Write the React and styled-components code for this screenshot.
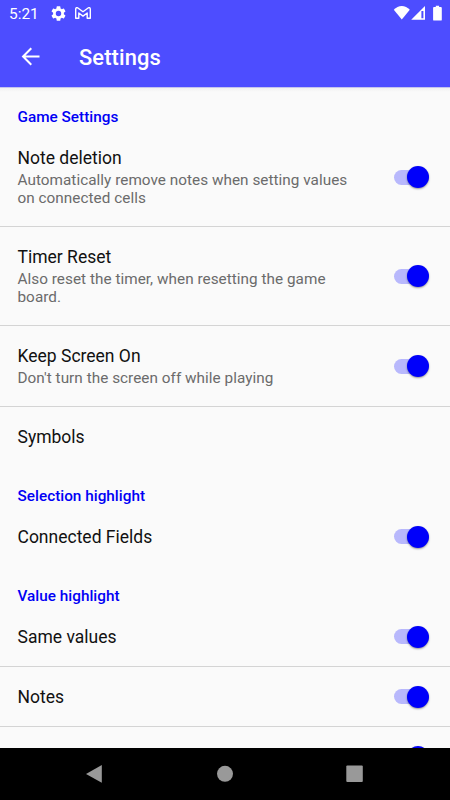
import React from 'react'
import styled, { createGlobalStyle } from 'styled-components';

const GlobalStyle = createGlobalStyle`
  * { box-sizing: border-box; }
  body {
    margin: 0;
    background: #fafafa;
    font-family: Roboto, "Noto Sans", sans-serif;
  }
`;

const Screen = styled.div`
  display: flex;
  flex-direction: column;
  width: 450px;
  height: 800px;
  overflow: hidden;
  background: #fafafa;
`;

const StatusBar = styled.div`
  display: flex;
  flex: none;
  align-items: center;
  height: 26px;
  padding: 0 7px 0 9px;
  background: #4d4dff;
  color: #fff;
`;

const Clock = styled.span`
  width: 42px;
  padding-top: 2px;
  font-size: 15.4px;
  line-height: 18px;
`;

const StatusIcons = styled.div`
  display: flex;
  flex: 1;
  gap: 9px;
  align-items: center;
`;

const Icon = styled.svg`
  display: block;
  flex: none;
`;

const Toolbar = styled.header`
  display: flex;
  flex: none;
  align-items: center;
  height: 61px;
  padding: 0 17px;
  background: #4d4dff;
  color: #fff;
`;

const BackButton = styled.button`
  display: flex;
  width: 62px;
  padding: 0;
  border: 0;
  background: none;
  color: inherit;
`;

const ToolbarTitle = styled.h1`
  margin: 3px 0 0;
  font-size: 21.9px;
  font-weight: 500;
  line-height: 26px;
  letter-spacing: 0.1px;
`;

const List = styled.main`
  flex: 1;
  min-height: 0;
  padding-top: 1px;
  overflow: hidden;
  background: linear-gradient(#c4c4ee 0 1px, #f1f1f1 1px, #fafafa 5px);
`;

const Category = styled.h2`
  display: flex;
  align-items: center;
  height: 40px;
  margin: 0;
  padding: 17px 17.5px 0;
  color: #0000f5;
  font-size: 15.3px;
  font-weight: 500;
  line-height: 18px;
  letter-spacing: 0.02px;
`;

const Row = styled.div`
  display: flex;
  align-items: center;
  height: ${(p) => p.$height}px;
  padding: 0 21.5px 0 17.5px;
  border-bottom: 1px solid ${(p) => (p.$divider ? '#d4d4d4' : 'transparent')};
`;

const RowText = styled.div`
  flex: 1;
  padding-top: ${(p) => (p.$single ? '2px' : '0')};
  padding-right: 34px;
`;

const RowTitle = styled.div`
  color: #111;
  font-size: 17.5px;
  line-height: 21px;
`;

const Summary = styled.div`
  margin-top: 2px;
  color: #6b6b6b;
  font-size: 15.3px;
  line-height: 18px;
  letter-spacing: 0.035px;
`;

const Track = styled.div`
  display: flex;
  flex: none;
  align-items: center;
  justify-content: flex-end;
  width: 34.5px;
  height: 15px;
  border-radius: 8px;
  background: linear-gradient(90deg, #b8b8fc 30px, transparent 30px);
`;

const Thumb = styled.div`
  width: 22px;
  height: 22px;
  flex: none;
  border-radius: 50%;
  background: #0000fa;
  box-shadow: 0 1px 2px rgba(0, 0, 0, 0.4);
`;

const NavBar = styled.nav`
  display: flex;
  flex: none;
  align-items: center;
  justify-content: space-between;
  height: 52px;
  padding: 0 86px 0 85px;
  background: #000;
  color: #999;
`;

const groups = [
    {
        title: 'Game Settings',
        items: [
            { title: 'Note deletion', summary: 'Automatically remove notes when setting values on connected cells', height: 99, toggle: true, divider: true },
            { title: 'Timer Reset', summary: 'Also reset the timer, when resetting the game board.', height: 99, toggle: true, divider: true },
            { title: 'Keep Screen On', summary: "Don't turn the screen off while playing", height: 81, toggle: true, divider: true },
            { title: 'Symbols', height: 60 },
        ],
    },
    {
        title: 'Selection highlight',
        items: [{ title: 'Connected Fields', height: 60, toggle: true }],
    },
    {
        title: 'Value highlight',
        items: [
            { title: 'Same values', height: 60, toggle: true, divider: true },
            { title: 'Notes', height: 60, toggle: true, divider: true },
            { title: '', height: 60, toggle: true },
        ],
    },
];

const Switch = () => (
    <Track>
        <Thumb />
    </Track>
);

const App = () => {
    return (
        <Screen>
            <GlobalStyle />
            <StatusBar>
                <Clock>5:21</Clock>
                <StatusIcons>
                    {/* settings gear */}
                    <Icon width="15" height="15" viewBox="2 2 20 20" fill="currentColor">
                        <path d="M19.14 12.94c.04-.3.06-.61.06-.94 0-.32-.02-.64-.07-.94l2.03-1.58a.49.49 0 0 0 .12-.61l-1.92-3.32a.49.49 0 0 0-.59-.22l-2.39.96a7 7 0 0 0-1.62-.94l-.36-2.54a.48.48 0 0 0-.48-.41h-3.84a.47.47 0 0 0-.47.41l-.36 2.54c-.59.24-1.13.57-1.62.94l-2.39-.96a.48.48 0 0 0-.59.22L2.74 8.87a.47.47 0 0 0 .12.61l2.03 1.58a6 6 0 0 0-.02 1.88l-2.03 1.58a.49.49 0 0 0-.12.61l1.92 3.32c.12.22.37.29.59.22l2.39-.96c.5.38 1.03.7 1.62.94l.36 2.54c.05.24.24.41.48.41h3.84c.24 0 .44-.17.47-.41l.36-2.54a6.9 6.9 0 0 0 1.62-.94l2.39.96c.22.08.47 0 .59-.22l1.92-3.32a.47.47 0 0 0-.12-.61zM12 15.6a3.6 3.6 0 1 1 0-7.2 3.6 3.6 0 0 1 0 7.2z" />
                    </Icon>
                    {/* gmail envelope */}
                    <Icon width="16" height="12" viewBox="0 0 16 12" fill="none" stroke="currentColor" strokeWidth="1.4" strokeLinejoin="round">
                        <path d="M.7 11.300V2C.7.7 2 .3 2.900 1L8 4.800 13.100 1c.9-.7 2.200-.3 2.200 1v9.300h-3.100V6L8 9.100 3.800 6v5.300z" />
                    </Icon>
                </StatusIcons>
                <Icon width="50" height="16" viewBox="0 0 50 16" fill="currentColor">
                    <path d="M8.800 14.500.8 4.700C5.200-.4 12.400-.4 16.800 4.700z" />
                    <path fillRule="evenodd" d="M18.200 14.800 32 1v13.800zM28.400 6v7.300h2V6z" />
                    <path d="M42.800.8v1.300H41q-.9 0-.9.900v11.700q0 .9.900.9h6.900q.9 0 .9-.9V3q0-.9-.9-.9h-1.800V.8z" />
                </Icon>
            </StatusBar>
            <Toolbar>
                <BackButton aria-label="Back">
                    <Icon width="27" height="27" viewBox="0 0 24 24" fill="none" stroke="currentColor" strokeWidth="1.800">
                        <path d="M20 12H5.500M12.700 4.700 5.400 12l7.300 7.300" />
                    </Icon>
                </BackButton>
                <ToolbarTitle>Settings</ToolbarTitle>
            </Toolbar>
            <List>
                {groups.map((group) => (
                    <section key={group.title}>
                        <Category>{group.title}</Category>
                        {group.items.map((item, index) => (
                            <Row key={index} $height={item.height} $divider={item.divider}>
                                <RowText $single={!item.summary}>
                                    <RowTitle>{item.title}</RowTitle>
                                    {item.summary && <Summary>{item.summary}</Summary>}
                                </RowText>
                                {item.toggle && <Switch />}
                            </Row>
                        ))}
                    </section>
                ))}
            </List>
            <NavBar>
                <Icon width="18" height="20" viewBox="0 0 18 20" fill="currentColor">
                    <path d="M16.800 1v17.800L1 9.900z" />
                </Icon>
                <Icon width="18" height="18" viewBox="0 0 18 18" fill="currentColor">
                    <circle cx="9" cy="8.800" r="8" />
                </Icon>
                <Icon width="18" height="18" viewBox="0 0 18 18" fill="currentColor">
                    <rect x=".3" y=".5" width="16.500" height="16.500" rx="1" />
                </Icon>
            </NavBar>
        </Screen>
    );
};

export default App
